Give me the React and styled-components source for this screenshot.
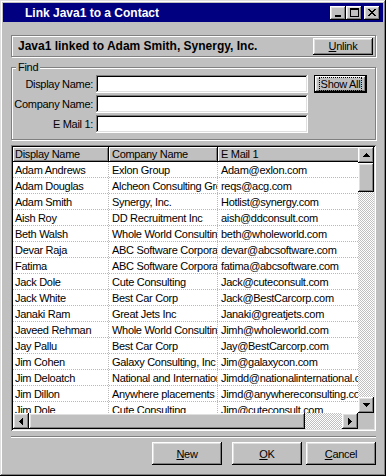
import React from 'react';
import styled, { createGlobalStyle } from 'styled-components';

const GlobalStyle = createGlobalStyle`
  html, body { margin: 0; padding: 0; background: #c0c0c0; }
  body { font-family: "Liberation Sans", Arial, sans-serif; color: #000; }
  * { box-sizing: border-box; }
`;

const raisedBevel = `box-shadow: inset -1px -1px #000, inset 1px 1px #fff, inset -2px -2px #808080, inset 2px 2px #dfdfdf;`;
const checker = `background: repeating-conic-gradient(#c0c0c0 0 25%, #fff 0 50%) 0 0 / 2px 2px;`;

const Window = styled.div`
  width: 386px;
  height: 476px;
  padding: 3px;
  background: #c0c0c0;
  box-shadow: inset -1px -1px #000, inset 1px 1px #dfdfdf, inset -2px -2px #808080, inset 2px 2px #fff;
  display: flex;
  flex-direction: column;
`;

const TitleBar = styled.div`
  height: 19px;
  background: #000080;
  display: flex;
  align-items: center;
  padding: 0 3px 0 22px;
`;

const Title = styled.div`
  flex: 1;
  color: #fff;
  font-weight: bold;
  font-size: 12px;
  white-space: nowrap;
`;

const TitleBtn = styled.div`
  width: 16px;
  height: 14px;
  background: #c0c0c0;
  ${raisedBevel}
  display: flex;
  align-items: center;
  justify-content: center;
  margin-left: ${p => (p.$gap ? 2 : 0)}px;
  svg { display: block; }
`;

const Body = styled.div`
  flex: 1;
  display: flex;
  flex-direction: column;
  padding: 0 7px 0 8px;
  font-size: 11px;
  letter-spacing: -0.3px;
`;

const InfoPanel = styled.div`
  margin-top: 13px;
  height: 22px;
  border: 1px solid #808080;
  box-shadow: inset 1px 1px #fff, 1px 1px #fff;
  display: flex;
  align-items: center;
  padding: 0 2px 0 6px;
`;

const InfoText = styled.div`
  flex: 1;
  font-weight: bold;
  font-size: 12px;
  letter-spacing: 0;
  white-space: nowrap;
`;

const Button = styled.button`
  font-family: inherit;
  font-size: 11px;
  letter-spacing: -0.3px;
  color: #000;
  width: ${p => p.$w}px;
  height: ${p => p.$h}px;
  margin: 0 0 0 ${p => p.$ml || 0}px;
  padding: 0;
  border: none;
  border-radius: 0;
  background: #c0c0c0;
  ${raisedBevel}
  display: flex;
  align-items: center;
  justify-content: center;
  u { text-decoration: underline; }
`;

const DefaultButton = styled(Button)`
  border: 1px solid #000;
`;

const FocusText = styled.span`
  outline: 1px dotted #000;
  outline-offset: 0;
  padding: 0 1px;
  line-height: 12px;
`;

const Group = styled.fieldset`
  margin: 4px 0 0;
  padding: 1px 0 6px 0;
  border: 1px solid #808080;
  box-shadow: inset 1px 1px #fff, 1px 1px #fff;
  min-width: 0;
`;

const Legend = styled.legend`
  margin-left: 4px;
  padding: 0 2px;
  font-size: 11px;
  line-height: 13px;
  background: #c0c0c0;
`;

const FindGrid = styled.div`
  display: grid;
  grid-template-columns: 81px 212px 53px;
  grid-auto-rows: 18px;
  column-gap: 3px;
  row-gap: 2px;
`;

const Label = styled.label`
  align-self: center;
  text-align: right;
  white-space: nowrap;
`;

const Field = styled.input`
  width: 212px;
  height: 18px;
  border: none;
  padding: 2px 3px;
  background: #fff;
  box-shadow: inset -1px -1px #fff, inset 1px 1px #808080, inset -2px -2px #dfdfdf, inset 2px 2px #000;
  font-family: inherit;
  font-size: 11px;
  outline: none;
`;

const ListView = styled.div`
  margin-top: 5px;
  height: 286px;
  padding: 2px;
  background: #fff;
  box-shadow: inset 1px 1px #808080, inset -1px -1px #fff, inset 2px 2px #000, inset -2px -2px #dfdfdf;
  display: grid;
  grid-template-columns: 1fr 16px;
  grid-template-rows: 1fr 16px;
`;

const Content = styled.div`
  overflow: hidden;
  min-width: 0;
  min-height: 0;
`;

const HeaderRow = styled.div`
  display: flex;
  height: 15px;
`;

const HeaderCell = styled.div`
  flex: 0 0 ${p => p.$w}px;
  height: 15px;
  background: #c0c0c0;
  box-shadow: inset -1px -1px #000, inset 1px 1px #fff, inset -2px -2px #808080;
  padding-left: ${p => p.$pl}px;
  line-height: 15px;
  white-space: nowrap;
  overflow: hidden;
`;

const Row = styled.div`
  display: flex;
  height: 16px;
  border-bottom: 1px dotted #b8b8b8;
`;

const Cell = styled.div`
  flex: 0 0 ${p => p.$w}px;
  height: 15px;
  border-right: 1px dotted #b8b8b8;
  padding: 1px 0 0 ${p => p.$pl}px;
  line-height: 14px;
  white-space: nowrap;
  overflow: hidden;
`;

const VScroll = styled.div`
  display: flex;
  flex-direction: column;
  ${checker}
`;

const HScroll = styled.div`
  display: flex;
  ${checker}
  min-width: 0;
`;

const ScrollBtn = styled.div`
  flex: 0 0 16px;
  width: 16px;
  height: 16px;
  background: #c0c0c0;
  ${raisedBevel}
  display: flex;
  align-items: center;
  justify-content: center;
  svg { display: block; }
`;

const Thumb = styled.div`
  flex: 0 0 ${p => p.$size}px;
  background: #c0c0c0;
  ${raisedBevel}
`;

const Track = styled.div`
  flex: 1;
`;

const Corner = styled.div`
  background: #c0c0c0;
`;

const Separator = styled.div`
  margin-top: 5px;
  height: 2px;
  border-top: 1px solid #808080;
  border-bottom: 1px solid #fff;
`;

const ButtonRow = styled.div`
  margin-top: 4px;
  display: flex;
  justify-content: flex-end;
`;

const Pixels = ({ w, h, rects }) => (
  <svg width={w} height={h} shapeRendering="crispEdges">
    {rects.map(([x, y, rw, rh], i) => (
      <rect key={i} x={x} y={y} width={rw} height={rh} fill="#000" />
    ))}
  </svg>
);

const arrows = {
  up: { w: 7, h: 4, rects: [[3, 0, 1, 1], [2, 1, 3, 1], [1, 2, 5, 1], [0, 3, 7, 1]] },
  down: { w: 7, h: 4, rects: [[0, 0, 7, 1], [1, 1, 5, 1], [2, 2, 3, 1], [3, 3, 1, 1]] },
  left: { w: 4, h: 7, rects: [[0, 3, 1, 1], [1, 2, 1, 3], [2, 1, 1, 5], [3, 0, 1, 7]] },
  right: { w: 4, h: 7, rects: [[0, 0, 1, 7], [1, 1, 1, 5], [2, 2, 1, 3], [3, 3, 1, 1]] },
};

const Arrow = ({ dir }) => <Pixels {...arrows[dir]} />;

const MinIcon = () => <Pixels w={8} h={8} rects={[[1, 6, 6, 2]]} />;
const MaxIcon = () => (
  <Pixels w={9} h={9} rects={[[0, 0, 9, 2], [0, 2, 1, 7], [8, 2, 1, 7], [0, 8, 9, 1]]} />
);
const CloseIcon = () => (
  <Pixels
    w={8}
    h={7}
    rects={[
      [0, 0, 2, 1], [6, 0, 2, 1],
      [1, 1, 2, 1], [5, 1, 2, 1],
      [2, 2, 4, 1],
      [3, 3, 2, 1],
      [2, 4, 4, 1],
      [1, 5, 2, 1], [5, 5, 2, 1],
      [0, 6, 2, 1], [6, 6, 2, 1],
    ]}
  />
);

const columns = [
  { name: 'Display Name', w: 96, pl: 2 },
  { name: 'Company Name', w: 109, pl: 3 },
  { name: 'E Mail 1', w: 220, pl: 3 },
];

const contacts = [
  ['Adam Andrews', 'Exlon Group', 'Adam@exlon.com'],
  ['Adam Douglas', 'Alcheon Consulting Group', 'reqs@acg.com'],
  ['Adam Smith', 'Synergy, Inc.', 'Hotlist@synergy.com'],
  ['Aish Roy', 'DD Recruitment Inc', 'aish@ddconsult.com'],
  ['Beth Walsh', 'Whole World Consulting', 'beth@wholeworld.com'],
  ['Devar Raja', 'ABC Software Corporation', 'devar@abcsoftware.com'],
  ['Fatima', 'ABC Software Corporation', 'fatima@abcsoftware.com'],
  ['Jack Dole', 'Cute Consulting', 'Jack@cuteconsult.com'],
  ['Jack White', 'Best Car Corp', 'Jack@BestCarcorp.com'],
  ['Janaki Ram', 'Great Jets Inc', 'Janaki@greatjets.com'],
  ['Javeed Rehman', 'Whole World Consulting', 'Jimh@wholeworld.com'],
  ['Jay Pallu', 'Best Car Corp', 'Jay@BestCarcorp.com'],
  ['Jim Cohen', 'Galaxy Consulting, Inc', 'Jim@galaxycon.com'],
  ['Jim Deloatch', 'National and International', 'Jimdd@nationalinternational.com'],
  ['Jim Dillon', 'Anywhere placements', 'Jimd@anywhereconsulting.com'],
  ['Jim Dole', 'Cute Consulting', 'Jim@cuteconsult.com'],
];

export default function App() {
  return (
    <>
      <GlobalStyle />
      <Window>
        <TitleBar>
          <Title>Link Java1 to a Contact</Title>
          <TitleBtn><MinIcon /></TitleBtn>
          <TitleBtn><MaxIcon /></TitleBtn>
          <TitleBtn $gap><CloseIcon /></TitleBtn>
        </TitleBar>
        <Body>
          <InfoPanel>
            <InfoText>Java1 linked to Adam Smith, Synergy, Inc.</InfoText>
            <Button $w={60} $h={17}><u>U</u>nlink</Button>
          </InfoPanel>

          <Group>
            <Legend>Find</Legend>
            <FindGrid>
              <Label>Display Name:</Label>
              <Field />
              <DefaultButton $w={53} $h={18} $ml={3}>
                <FocusText>Show All</FocusText>
              </DefaultButton>
              <Label>Company Name:</Label>
              <Field />
              <span />
              <Label>E Mail 1:</Label>
              <Field />
              <span />
            </FindGrid>
          </Group>

          <ListView>
            <Content>
              <HeaderRow>
                {columns.map(c => (
                  <HeaderCell key={c.name} $w={c.w} $pl={c.pl}>{c.name}</HeaderCell>
                ))}
              </HeaderRow>
              {contacts.map(row => (
                <Row key={row[0]}>
                  {row.map((v, i) => (
                    <Cell key={i} $w={columns[i].w} $pl={columns[i].pl}>{v}</Cell>
                  ))}
                </Row>
              ))}
            </Content>
            <VScroll>
              <ScrollBtn><Arrow dir="up" /></ScrollBtn>
              <Thumb $size={29} />
              <Track />
              <ScrollBtn><Arrow dir="down" /></ScrollBtn>
            </VScroll>
            <HScroll>
              <ScrollBtn><Arrow dir="left" /></ScrollBtn>
              <Thumb $size={276} />
              <Track />
              <ScrollBtn><Arrow dir="right" /></ScrollBtn>
            </HScroll>
            <Corner />
          </ListView>

          <Separator />

          <ButtonRow>
            <Button $w={70} $h={23}><u>N</u>ew</Button>
            <Button $w={70} $h={23} $ml={10}><u>O</u>K</Button>
            <Button $w={70} $h={23} $ml={4}><u>C</u>ancel</Button>
          </ButtonRow>
        </Body>
      </Window>
    </>
  );
}
